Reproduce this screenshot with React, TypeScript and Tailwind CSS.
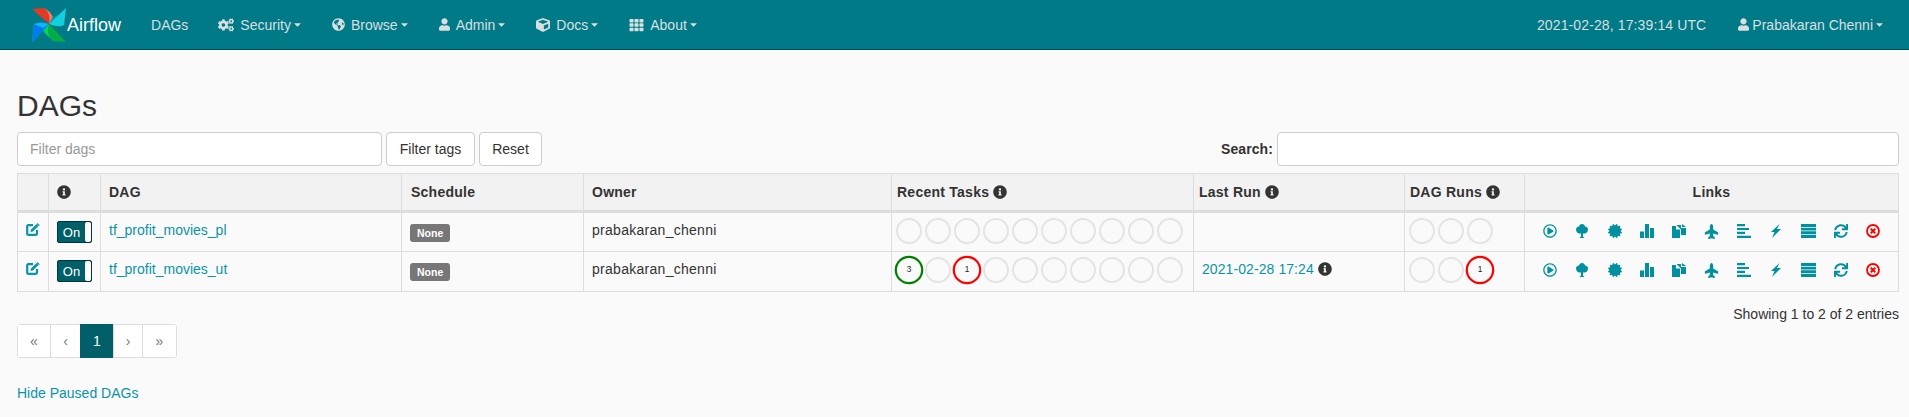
import type { ReactNode } from "react";
import {
  FaCaretDown,
  FaCertificate,
  FaCogs,
  FaCube,
  FaGlobeAmericas,
  FaInfoCircle,
  FaPlane,
  FaRegPlayCircle,
  FaSync,
  FaTh,
  FaUser,
} from "react-icons/fa";

function Pinwheel() {
  return (
    <svg viewBox="0 0 34 34" className="h-[34px] w-[34px] shrink-0">
      <path d="M0 1 L12 0 Q19 5 17 16 Z" fill="#e43921" />
      <path d="M12 0 Q19 5 17 16 L21 9 Q18 3 12 0Z" fill="#f47d6a" />
      <path d="M34 0 L32 17 Q27 20 17 16 Z" fill="#11d1de" />
      <path d="M34 0 L17 16 Q22 7 27 7 Z" fill="#04a8bd" />
      <path d="M34 34 L21 33 Q14 28 17 16 Z" fill="#00ad46" />
      <path d="M21 33 Q14 28 17 16 L11 23 Z" fill="#04d659" />
      <path d="M0 34 L2 16 Q8 13 17 16 Z" fill="#0cb6ff" />
      <path d="M0 34 L2 16 L11 20 L17 16 Z" fill="#017cee" />
    </svg>
  );
}

function NavItem({
  icon,
  label,
  caret = true,
  gap = "gap-[6px]",
}: {
  icon?: ReactNode;
  label: string;
  caret?: boolean;
  gap?: string;
}) {
  return (
    <a className={`flex h-[49px] items-center px-[15px] text-[#d9dfe0] ${gap}`}>
      {icon}
      <span className="flex items-center">
        {label}
        {caret && <FaCaretDown className="ml-[2px] h-[11px] w-[9px]" />}
      </span>
    </a>
  );
}

function Navbar() {
  return (
    <nav className="flex h-[50px] items-center border-b border-[#004e58] bg-[#007a87] pr-[10px]">
      <div className="ml-[32px] mr-[15px] flex items-center">
        <Pinwheel />
        <span className="ml-[1px] text-[18px] text-white">Airflow</span>
      </div>
      <NavItem label="DAGs" caret={false} />
      <NavItem icon={<FaCogs className="h-[14px] w-[16px]" />} label="Security" />
      <NavItem icon={<FaGlobeAmericas className="h-[13px] w-[13px]" />} label="Browse" />
      <NavItem icon={<FaUser className="h-[13px] w-[11px]" />} label="Admin" />
      <NavItem icon={<FaCube className="h-[14px] w-[14px]" />} label="Docs" />
      <NavItem icon={<FaTh className="h-[14px] w-[15px]" />} label="About" />
      <span className="ml-auto mr-[17px] tracking-[0.12px] text-[#d9dfe0]">2021-02-28, 17:39:14 UTC</span>
      <NavItem icon={<FaUser className="h-[13px] w-[11px]" />} label="Prabakaran Chenni" gap="gap-[3px]" />
    </nav>
  );
}

function Circle({ count, tone }: { count?: number; tone?: "green" | "red" }) {
  const border = tone === "green" ? "border-[#008000]" : tone === "red" ? "border-[#ff0000]" : "border-[#e4e4e4]";
  return (
    <span
      className={`flex h-[26px] w-[26px] shrink-0 items-center justify-center rounded-full border-2 text-[7.500px] text-[#222] ${border} ${tone ? "scale-110" : ""}`}
    >
      {count}
    </span>
  );
}

function Circles({ total, marks }: { total: number; marks?: Record<number, { count: number; tone: "green" | "red" }> }) {
  return (
    <div className="flex gap-[3px]">
      {Array.from({ length: total }, (_, i) => (
        <Circle key={i} count={marks?.[i]?.count} tone={marks?.[i]?.tone} />
      ))}
    </div>
  );
}

function Info() {
  return <FaInfoCircle className="inline-block h-[14px] w-[14px] align-[-2px] text-[#333]" />;
}

function EditIcon() {
  return (
    <svg viewBox="0 0 14 13" className="h-[13px] w-[14px] text-[#0a94a8]">
      <path d="M7 2.200H2.500A1.200 1.200 0 0 0 1.200 3.500v7.300a1.200 1.200 0 0 0 1.300 1h7.300a1.200 1.200 0 0 0 1.200-1.200V7" fill="none" stroke="currentColor" strokeWidth="2.200" />
      <path d="M5 6.500L10.500 1l2 2L7 8.500 4.500 9z" fill="currentColor" />
      <path d="M11.500 0l2.300 2.200-.9.900-2.300-2.200z" fill="currentColor" />
    </svg>
  );
}

const iconClass = "h-[14px] w-[14px]";

const linkIcons = [
  <FaRegPlayCircle className={iconClass} />,
  <svg viewBox="0 0 14 14" className={iconClass}>
    <path d="M7 0 C9 0 10 1.500 10 2.500 C12 2.500 13 4 13 5.500 C13 7.500 11.500 9.500 9.500 9.500 L8 9.500 L8 12.500 L9.500 14 L4.500 14 L6 12.500 L6 9.500 L4.500 9.500 C2.500 9.500 1 7.500 1 5.500 C1 4 2 2.500 4 2.500 C4 1.500 5 0 7 0Z" fill="currentColor" />
  </svg>,
  <FaCertificate className={iconClass} />,
  <svg viewBox="0 0 14 14" className={iconClass}>
    <path d="M0 7.500h4V14H0zM5 0h4v14H5zM10 4h4v10h-4z" fill="currentColor" />
  </svg>,
  <svg viewBox="0 0 14 14" className={iconClass}>
    <path d="M0 2h4v3.500h4V14H0zM5 2V1h4v3h5v7H9V5.500L5.500 2zM10 0l4 3h-4z" fill="currentColor" />
  </svg>,
  <FaPlane className={`h-[15px] w-[15px] -rotate-90`} />,
  <svg viewBox="0 0 14 14" className={iconClass}>
    <path d="M0 0h8v2.200H0zM0 3.900h12v2.200H0zM0 7.800h8v2.200H0zM0 11.700h14v2.300H0z" fill="currentColor" />
  </svg>,
  <svg viewBox="0 0 10 14" className="h-[14px] w-[10px]">
    <path d="M8.500 0L0 8h3.500L1 14l9-9H6z" fill="currentColor" />
  </svg>,
  <svg viewBox="0 0 15 14" className="h-[14px] w-[15px]">
    <path d="M0 0h15v3H0zM0 3.700h15v2.800H0zM0 7.300h15v2.900H0zM0 11h15v3H0z" fill="currentColor" />
  </svg>,
  <FaSync className={iconClass} />,
  <svg viewBox="0 0 14 14" className={`${iconClass} text-[#ff0000]`}>
    <circle cx="7" cy="7" r="6" fill="none" stroke="currentColor" strokeWidth="1.800" />
    <path d="M4.800 4.800l4.400 4.400M9.200 4.800l-4.400 4.400" stroke="currentColor" strokeWidth="2" />
  </svg>,
];

function Toggle() {
  return (
    <div className="flex h-[22px] w-[35px] overflow-hidden rounded-[2px] border border-[#00363d] bg-[#005f69] text-white">
      <span className="flex-1 pt-[1px] text-center text-[13px] leading-[20px]">On</span>
      <span className="w-[6px] rounded-[2px] bg-white" />
    </div>
  );
}

const th = "border border-[#dddddd] px-[8px] text-left font-bold tracking-[0.25px]";
const td = "border border-[#dddddd] px-[8px] align-top";
const link = "text-[#0a94a8]";

function DagRow({
  name,
  tasks,
  lastRun,
  runs,
}: {
  name: string;
  tasks?: Record<number, { count: number; tone: "green" | "red" }>;
  lastRun?: string;
  runs?: Record<number, { count: number; tone: "green" | "red" }>;
}) {
  return (
    <tr className="h-[40px]">
      <td className={`${td} pt-[10px]`}>
        <EditIcon />
      </td>
      <td className={`${td} pt-[8px]`}>
        <Toggle />
      </td>
      <td className={`${td} pt-[7px] ${link}`}>{name}</td>
      <td className={`${td} pt-[11px]`}>
        <span className="block h-[18px] w-fit rounded-[3px] bg-[#777777] px-[7px] text-[10.5px] font-bold leading-[18px] text-white">
          None
        </span>
      </td>
      <td className={`${td} pt-[7px] tracking-[0.28px]`}>prabakaran_chenni</td>
      <td className={`${td} !pl-[4px] pt-[5px]`}>
        <Circles total={10} marks={tasks} />
      </td>
      <td className={`${td} pt-[7px]`}>
        {lastRun && (
          <span className="tracking-[0.08px]">
            <a className={link}>{lastRun}</a> <Info />
          </span>
        )}
      </td>
      <td className={`${td} !pl-[4px] pt-[5px]`}>
        <Circles total={3} marks={runs} />
      </td>
      <td className={`${td} !px-[9px] pt-[11px]`}>
        <div className="flex text-[#00909f]">
          {linkIcons.map((icon, i) => (
            <span key={i} className="flex w-[32.400px] justify-center">
              {icon}
            </span>
          ))}
        </div>
      </td>
    </tr>
  );
}

function PageLink({ children, active = false, className = "" }: { children: ReactNode; active?: boolean; className?: string }) {
  return (
    <a
      className={`-ml-px flex h-[34px] items-center justify-center border first:ml-0 ${
        active ? "border-[#005f69] bg-[#005f69] text-white" : "border-[#dddddd] bg-white text-[#777777]"
      } ${className}`}
    >
      {children}
    </a>
  );
}

export default function App() {
  return (
    <div className="min-h-[417px] bg-[#fafafa] font-['Liberation_Sans',Arial,sans-serif] text-[14px] leading-[20px] text-[#333333]">
      <Navbar />
      <main className="px-[10px] pl-[17px]">
        <h2 className="pt-[39px] text-[30px] leading-[33px]">DAGs</h2>
        <div className="mt-[10px] flex items-center">
          <input
            placeholder="Filter dags"
            className="h-[34px] w-[365px] rounded-[4px] border border-[#cccccc] bg-white px-[12px] placeholder:text-[#999999]"
          />
          <button className="ml-[4px] h-[34px] w-[89px] rounded-[4px] border border-[#cccccc] bg-white">Filter tags</button>
          <button className="ml-[4px] h-[34px] w-[63px] rounded-[4px] border border-[#cccccc] bg-white">Reset</button>
          <label className="ml-auto font-bold tracking-[0.1px]">Search:</label>
          <input className="ml-[4px] h-[34px] w-[622px] rounded-[4px] border border-[#cccccc] bg-white" />
        </div>
        <table className="mt-[7px] w-[1882px] table-fixed border-collapse">
          <colgroup>
            <col className="w-[31px]" />
            <col className="w-[52px]" />
            <col className="w-[301px]" />
            <col className="w-[182px]" />
            <col className="w-[308px]" />
            <col className="w-[302px]" />
            <col className="w-[211px]" />
            <col className="w-[120px]" />
            <col />
          </colgroup>
          <thead>
            <tr className="h-[38px] border-b-[3px] border-[#dddddd] bg-[#f2f2f2]">
              <th className={th} />
              <th className={th}>
                <Info />
              </th>
              <th className={th}>DAG</th>
              <th className={`${th} !pl-[9px]`}>Schedule</th>
              <th className={th}>Owner</th>
              <th className={`${th} !pl-[5px]`}>
                Recent Tasks <Info />
              </th>
              <th className={`${th} !pl-[5px]`}>
                Last Run <Info />
              </th>
              <th className={`${th} !pl-[5px]`}>
                DAG Runs <Info />
              </th>
              <th className={`${th} !text-center`}>Links</th>
            </tr>
          </thead>
          <tbody>
            <DagRow name="tf_profit_movies_pl" />
            <DagRow
              name="tf_profit_movies_ut"
              tasks={{ 0: { count: 3, tone: "green" }, 2: { count: 1, tone: "red" } }}
              lastRun="2021-02-28 17:24"
              runs={{ 2: { count: 1, tone: "red" } }}
            />
          </tbody>
        </table>
        <p className="mt-[12px] w-[1882px] text-right">Showing 1 to 2 of 2 entries</p>
        <div className="flex w-fit overflow-hidden rounded-[4px]">
          <PageLink className="w-[34px]">«</PageLink>
          <PageLink className="w-[31px]">‹</PageLink>
          <PageLink active className="w-[34px]">1</PageLink>
          <PageLink className="w-[30px]">›</PageLink>
          <PageLink className="w-[35px]">»</PageLink>
        </div>
        <a className={`mt-[25px] block ${link}`}>Hide Paused DAGs</a>
      </main>
    </div>
  );
}
